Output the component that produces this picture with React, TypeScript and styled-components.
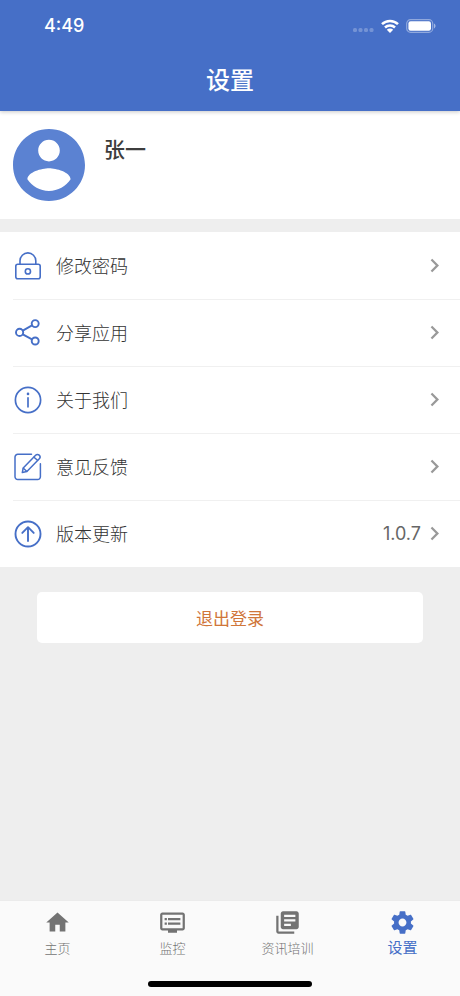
import React from "react";
import styled, { createGlobalStyle } from "styled-components";
import { MdChevronRight, MdDvr, MdHome, MdLibraryBooks } from "react-icons/md";

const BLUE = "#466fc7";

const GlobalStyle = createGlobalStyle`
  * { box-sizing: border-box; }
  body {
    margin: 0;
    background: #eeeeee;
    color: #3d3d3d;
    font-family: Inter, "Noto Sans CJK SC", sans-serif;
  }
  button { font: inherit; color: inherit; border: 0; margin: 0; cursor: pointer; }
  svg { display: block; flex: none; }
`;

const Screen = styled.div`
  min-height: 100vh;
  display: flex;
  flex-direction: column;
`;

const Header = styled.header`
  position: relative;
  background: ${BLUE};
  color: #fff;
  box-shadow: 0 1px 4px rgba(0, 0, 0, 0.22);
`;

const StatusBar = styled.div`
  display: flex;
  align-items: center;
  justify-content: space-between;
  height: 51px;
  padding: 0 24px 0 44px;
`;

const Clock = styled.span`
  font-size: 18px;
  line-height: 24px;
  font-weight: 500;
`;

const StatusIcons = styled.div`
  display: flex;
  align-items: center;
  gap: 7px;
`;

const Title = styled.h1`
  margin: 0;
  height: 60px;
  text-align: center;
  font-size: 24px;
  line-height: 60px;
  font-weight: 500;
`;

const Profile = styled.section`
  display: flex;
  gap: 19px;
  height: 108px;
  padding: 18px 13px;
  background: #fff;
`;

const Name = styled.h2`
  margin: 6px 0 0;
  font-size: 21px;
  line-height: 30px;
  font-weight: 500;
`;

const Menu = styled.ul`
  list-style: none;
  margin: 13px 0 0;
  padding: 0;
  background: #fff;
`;

const MenuItem = styled.li`
  & + & {
    background: linear-gradient(#f0f0f0, #f0f0f0) 13px 0 / 100% 1px no-repeat;
  }
`;

const MenuButton = styled.button`
  display: flex;
  align-items: center;
  width: 100%;
  height: 67px;
  padding: 0 12px 0 14px;
  background: transparent;
  text-align: left;
`;

const Label = styled.span`
  flex: 1;
  margin-left: 14px;
  padding-top: 2px;
  color: #333;
  font-size: 18px;
  line-height: 26px;
  font-weight: 300;
`;

const Value = styled.span`
  color: #666;
  font-size: 18px;
  line-height: 26px;
`;

const Chevron = styled(MdChevronRight)`
  color: #999;
`;

const Logout = styled.button`
  height: 51px;
  border-radius: 5px;
  background: #fff;
  && {
    margin: 25px 37px;
    color: #d0763a;
    font-size: 17px;
  }
`;

const TabBar = styled.nav`
  margin-top: auto;
  background: #fafafa;
  border-top: 1px solid #ebebeb;
`;

const Tabs = styled.div`
  display: grid;
  grid-template-columns: repeat(4, 1fr);
  height: 80px;
`;

const Tab = styled.button<{ $active?: boolean }>`
  display: flex;
  flex-direction: column;
  align-items: center;
  padding: 8px 0 0;
  background: transparent;
  && { color: ${(p) => (p.$active ? BLUE : "#737373")}; }
`;

const TabLabel = styled.span<{ $active?: boolean }>`
  font-size: ${(p) => (p.$active ? 15 : 13)}px;
  line-height: ${(p) => (p.$active ? 23 : 24)}px;
  font-weight: ${(p) => (p.$active ? 400 : 300)};
`;

const HomeIndicator = styled.div`
  width: 164px;
  height: 6px;
  margin: 0 auto 9px;
  border-radius: 3px;
  background: #000;
`;

const Outline = styled.svg`
  width: 28px;
  height: 28px;
  fill: none;
  stroke: ${BLUE};
  stroke-linecap: round;
  stroke-linejoin: round;
`;

const LockIcon = () => (
  <Outline viewBox="0 0 28 28" strokeWidth="1.6">
    <rect x="1.8" y="12.2" width="24.4" height="14.6" rx="2" />
    <path d="M6 12V8.8a7.9 7.9 0 0 1 15.8 0V12" />
    <circle cx="13.9" cy="19.4" r="2.6" />
  </Outline>
);

const ShareIcon = () => (
  <Outline viewBox="0 0 28 28" strokeWidth="1.9">
    <circle cx="5.6" cy="13.4" r="3.6" />
    <circle cx="21.2" cy="4.6" r="3.5" />
    <circle cx="21.2" cy="22" r="3.5" />
    <path d="M8.8 11.6 18 6.4M8.8 15.3 18 20.3" />
  </Outline>
);

const InfoIcon = () => (
  <Outline viewBox="0 0 28 28" strokeWidth="1.7">
    <circle cx="14" cy="14" r="12.6" />
    <path d="M14 11.8V20.8" />
    <circle cx="14" cy="7.9" r="1.3" fill={BLUE} stroke="none" />
  </Outline>
);

const FeedbackIcon = () => (
  <Outline viewBox="0 0 28 28" strokeWidth="1.5">
    <path d="M17.5 1.3H3.8A2.8 2.8 0 0 0 1 4.1V23.8a2.8 2.8 0 0 0 2.8 2.8H23.6a2.8 2.8 0 0 0 2.8-2.8V10.8" />
    <path d="M8.3 19.6 9.2 15 21.6 2.2a2.4 2.4 0 0 1 3.7 3.5L12.9 18.4Z" />
    <path d="M9.4 15.2 12.7 18.2M20 4.2 23.5 7.3" />
  </Outline>
);

const UpdateIcon = () => (
  <Outline viewBox="0 0 28 28" strokeWidth="1.9">
    <circle cx="14" cy="14" r="12.5" />
    <path d="M14 21V8.2M8.3 12.9 14 7.2 19.7 12.9" />
  </Outline>
);

const Avatar = () => (
  <svg width="72" height="72" viewBox="2 2 20 20" fill="#5b82d2" role="img" aria-label="头像">
    <path d="M12 2C6.48 2 2 6.48 2 12s4.48 10 10 10 10-4.48 10-10S17.52 2 12 2zm0 3c1.66 0 3 1.34 3 3s-1.34 3-3 3-3-1.34-3-3 1.34-3 3-3zm0 14.2c-2.5 0-4.71-1.28-6-3.22.03-1.99 4-3.08 6-3.08 1.99 0 5.97 1.09 6 3.08-1.29 1.94-3.5 3.22-6 3.22z" />
  </svg>
);

const SignalIcon = () => (
  <svg width="21" height="14" viewBox="0 0 21 14" fill="#fff" fillOpacity="0.25">
    <rect x="0" y="9" width="4" height="4" rx="1.5" />
    <rect x="5.5" y="9" width="4" height="4" rx="1.5" />
    <rect x="11" y="9" width="4" height="4" rx="1.5" />
    <rect x="16.5" y="9" width="4" height="4" rx="1.5" />
  </svg>
);

const WifiIcon = () => (
  <svg width="18" height="14" viewBox="0 0 18 14" fill="none" stroke="#fff" strokeWidth="2.5">
    <path d="M1 5.2a11.4 11.4 0 0 1 16 0M4 8.5a7.2 7.2 0 0 1 10 0" />
    <path d="M9 14 5.8 10.8a4.6 4.6 0 0 1 6.4 0Z" fill="#fff" stroke="none" />
  </svg>
);

const BatteryIcon = () => (
  <svg width="30" height="14" viewBox="0 0 30 14">
    <rect x="0.7" y="0.7" width="26" height="12.6" rx="3.8" fill="none" stroke="#fff" strokeOpacity="0.4" strokeWidth="1.2" />
    <rect x="2.4" y="2.3" width="22.6" height="9.4" rx="2.2" fill="#fff" />
    <path d="M28 4.6c2 .8 2 4 0 4.8z" fill="#fff" fillOpacity="0.5" />
  </svg>
);

const GearIcon = () => (
  <svg width="27" height="27" viewBox="0 0 24 24" fill="currentColor">
    <path d="M19.43 12.98c.04-.32.07-.64.07-.98s-.03-.66-.07-.98l2.11-1.65c.19-.15.24-.42.12-.64l-2-3.46c-.12-.22-.39-.3-.61-.22l-2.49 1c-.52-.4-1.08-.73-1.69-.98l-.38-2.65C14.46 2.18 14.25 2 14 2h-4c-.25 0-.46.18-.49.42l-.38 2.65c-.61.25-1.17.59-1.69.98l-2.49-1c-.23-.09-.49 0-.61.22l-2 3.46c-.13.22-.07.49.12.64l2.11 1.65c-.04.32-.07.65-.07.98s.03.66.07.98l-2.11 1.65c-.19.15-.24.42-.12.64l2 3.46c.12.22.39.3.61.22l2.49-1c.52.4 1.08.73 1.69.98l.38 2.65c.03.24.24.42.49.42h4c.25 0 .46-.18.49-.42l.38-2.65c.61-.25 1.17-.59 1.69-.98l2.49 1c.23.09.49 0 .61-.22l2-3.46c.12-.22.07-.49-.12-.64l-2.11-1.65zM12 15.5c-1.93 0-3.5-1.57-3.5-3.5s1.57-3.5 3.5-3.5 3.5 1.57 3.5 3.5-1.57 3.5-3.5 3.5z" />
  </svg>
);

const menuItems = [
  { label: "修改密码", icon: <LockIcon /> },
  { label: "分享应用", icon: <ShareIcon /> },
  { label: "关于我们", icon: <InfoIcon /> },
  { label: "意见反馈", icon: <FeedbackIcon /> },
  { label: "版本更新", icon: <UpdateIcon />, value: "1.0.7" },
];

const tabs = [
  { label: "主页", icon: <MdHome size={27} /> },
  { label: "监控", icon: <MdDvr size={27} /> },
  { label: "资讯培训", icon: <MdLibraryBooks size={27} /> },
  { label: "设置", icon: <GearIcon />, active: true },
];

export default function App() {
  return (
    <Screen>
      <GlobalStyle />
      <Header>
        <StatusBar>
          <Clock>4:49</Clock>
          <StatusIcons>
            <SignalIcon />
            <WifiIcon />
            <BatteryIcon />
          </StatusIcons>
        </StatusBar>
        <Title>设置</Title>
      </Header>
      <Profile>
        <Avatar />
        <Name>张一</Name>
      </Profile>
      <Menu>
        {menuItems.map((item) => (
          <MenuItem key={item.label}>
            <MenuButton type="button">
              {item.icon}
              <Label>{item.label}</Label>
              {item.value && <Value>{item.value}</Value>}
              <Chevron size={27} />
            </MenuButton>
          </MenuItem>
        ))}
      </Menu>
      <Logout type="button">退出登录</Logout>
      <TabBar>
        <Tabs>
          {tabs.map((tab) => (
            <Tab key={tab.label} type="button" $active={tab.active} aria-current={tab.active ? "page" : undefined}>
              {tab.icon}
              <TabLabel $active={tab.active}>{tab.label}</TabLabel>
            </Tab>
          ))}
        </Tabs>
        <HomeIndicator />
      </TabBar>
    </Screen>
  );
}
